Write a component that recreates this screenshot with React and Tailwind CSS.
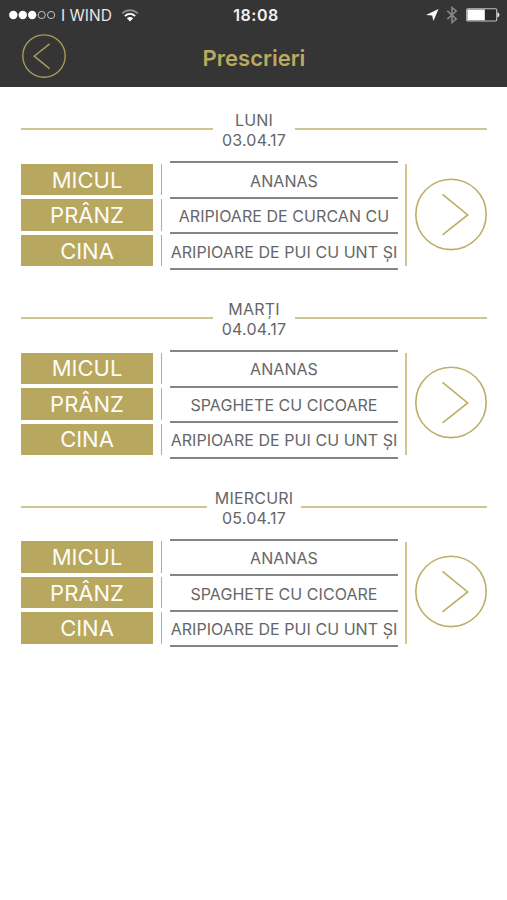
import React from "react";

const days = [
  { day: "LUNI", date: "03.04.17", meals: ["ANANAS", "ARIPIOARE DE CURCAN CU", "ARIPIOARE DE PUI CU UNT ȘI"] },
  { day: "MARȚI", date: "04.04.17", meals: ["ANANAS", "SPAGHETE CU CICOARE", "ARIPIOARE DE PUI CU UNT ȘI"] },
  { day: "MIERCURI", date: "05.04.17", meals: ["ANANAS", "SPAGHETE CU CICOARE", "ARIPIOARE DE PUI CU UNT ȘI"] },
];

const labels = ["MICUL", "PRÂNZ", "CINA"];

const StatusBar = () => {
  return (
    <div className="flex h-[30px] items-center justify-between pl-[9px] pr-[7px] text-white">
      <div className="flex w-[150px] items-center">
        <svg width="48" height="10" viewBox="0 0 48 10">
          <circle cx="4.3" cy="5" r="4.2" fill="#fff" />
          <circle cx="13.8" cy="5" r="4.2" fill="#fff" />
          <circle cx="23.2" cy="5" r="4.2" fill="#fff" />
          <circle cx="32.7" cy="5" r="3.6" fill="none" stroke="#d0d0d0" strokeWidth="0.9" />
          <circle cx="42.1" cy="5" r="3.6" fill="none" stroke="#d0d0d0" strokeWidth="0.9" />
        </svg>
        <span className="ml-[4px] w-[53px] whitespace-nowrap pt-px text-[15.5px] text-[#e6e6e6]">I WIND</span>
        <svg className="ml-[7px]" width="18" height="13" viewBox="0 0 18 13" fill="none">
          <path d="M1.3 4.4C5.7 0.2 12.3 0.2 16.7 4.4" stroke="#8b8b8b" strokeWidth="1.8" />
          <path d="M3.9 7.1C6.9 4.3 11.1 4.3 14.1 7.1" stroke="#fff" strokeWidth="1.9" />
          <path d="M9 12.5L5.9 9.3C7.7 7.7 10.3 7.7 12.1 9.3Z" fill="#fff" />
        </svg>
      </div>
      <span className="pl-[3px] text-[16px] font-semibold tracking-[0.5px] text-[#f2f2f2]">18:08</span>
      <div className="flex w-[150px] items-center justify-end">
        <svg width="13" height="12" viewBox="0 0 13 12">
          <path d="M12.5 0L0 6L6.2 6.6L7.4 12Z" fill="#fff" />
        </svg>
        <svg className="ml-[7px]" width="12" height="18" viewBox="0 0 12 18" fill="none" stroke="#868686" strokeWidth="1.6">
          <path d="M1.3 4.8L10.2 13L6 16.5V1.5L10.2 5L1.3 13.2" />
        </svg>
        <svg className="ml-[8px]" width="34" height="14" viewBox="0 0 34 14">
          <rect x="0.7" y="0.7" width="30" height="12.3" rx="1.2" fill="#2b2b2b" stroke="#c4c4c4" strokeWidth="1.1" />
          <rect x="1.4" y="1.5" width="17.4" height="10.8" fill="#fff" />
          <path d="M31.4 4.2C34 5 34 8.6 31.4 9.4Z" fill="#e8e8e8" />
        </svg>
      </div>
    </div>
  );
};

const Header = () => {
  return (
    <header className="h-[87px] bg-[#353535]">
      <StatusBar />
      <div className="grid h-[54px] grid-cols-[1fr_auto_1fr] items-center px-[21px]">
        <button className="w-[46px]">
          <svg width="46" height="46" viewBox="0 0 46 46" fill="none" stroke="#a39a5b">
            <circle cx="23" cy="22.1" r="21.2" strokeWidth="1.4" />
            <path d="M28.6 9.8L13.2 22.2L28.6 34.6" strokeWidth="1.5" />
          </svg>
        </button>
        <h1 className="pl-px pt-[3px] text-[22px] font-semibold text-[#b9aa60]">Prescrieri</h1>
        <span />
      </div>
    </header>
  );
};

const DaySection = ({ item }) => {
  return (
    <section className="mb-[29.8px] h-[159px]">
      {/* Day name and date between the two rules */}
      <div className="flex h-[40px] items-center">
        <div className="mb-[4px] h-[2px] flex-1 bg-[#d0c590]" />
        <div className="min-w-[82px] px-[7.5px] text-center text-[16px] leading-[19.7px] tracking-[0.2px] text-[#666668]">
          <p>{item.day}</p>
          <p>{item.date}</p>
        </div>
        <div className="mb-[4px] h-[2px] flex-1 bg-[#d0c590]" />
      </div>

      {/* Meals */}
      <div className="mt-[10px] flex h-[109px] items-center">
        <div className="mb-px flex flex-col gap-[4px]">
          {labels.map((label) => (
            <div key={label} className="flex items-center">
              <div className="flex h-[31.5px] w-[132px] items-center justify-center bg-[#b8a75e] pt-px text-[22px] text-[#fdfcf6]">
                {label}
              </div>
              <div className="ml-[8px] h-[31.5px] w-px bg-[#bdae68]" />
            </div>
          ))}
        </div>
        <ul className="ml-[8px] w-[228px] border-t-2 border-[#858587]">
          {item.meals.map((meal, i) => (
            <li key={i} className="flex h-[35.5px] items-center justify-center whitespace-nowrap border-b-2 border-[#858587] pt-px text-[16px] tracking-[0.05px] text-[#666668]">
              {meal}
            </li>
          ))}
        </ul>
        <div className="mb-px ml-[7px] h-[102px] w-[2px] bg-[#d0c590]" />
        <button className="mb-[2px] ml-[8px]">
          <svg className="overflow-visible" width="72" height="72" viewBox="0 0 72 72" fill="none" stroke="#bdae66">
            <circle cx="36" cy="35.4" r="35.2" strokeWidth="1.6" />
            <path d="M27.5 15.4L52.7 35.9L27.5 55.9" strokeWidth="1.6" />
          </svg>
        </button>
      </div>
    </section>
  );
};

const App = () => {
  return (
    <div className="min-h-[900px] w-[507px] overflow-hidden bg-white font-['Inter',sans-serif]">
      <Header />
      <main className="pl-[21px] pr-[20px] pt-[24px]">
        {days.map((item) => (
          <DaySection key={item.date} item={item} />
        ))}
      </main>
    </div>
  );
};

export default App;
